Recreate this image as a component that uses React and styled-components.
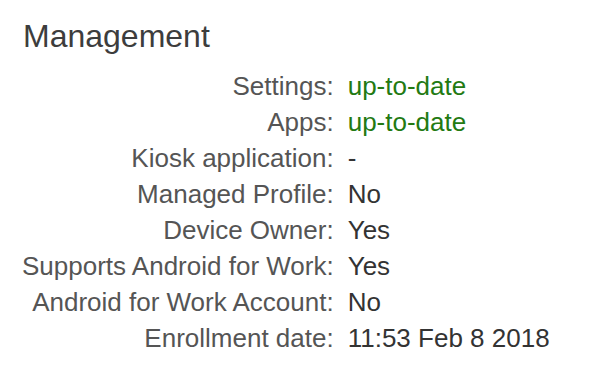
import React from 'react'
import styled, { createGlobalStyle } from 'styled-components'

const GlobalStyle = createGlobalStyle`
  body {
    margin: 0;
    background: #ffffff;
    font-family: 'Liberation Sans', Arial, sans-serif;
  }
`

const rows = [
  { label: 'Settings', value: 'up-to-date', ok: true },
  { label: 'Apps', value: 'up-to-date', ok: true },
  { label: 'Kiosk application', value: '-' },
  { label: 'Managed Profile', value: 'No' },
  { label: 'Device Owner', value: 'Yes' },
  { label: 'Supports Android for Work', value: 'Yes' },
  { label: 'Android for Work Account', value: 'No' },
  { label: 'Enrollment date', value: '11:53 Feb 8 2018' },
]

const App = () => {
  return (
    <Panel>
      <GlobalStyle />
      <Title>Management</Title>
      <Details>
        {rows.map((row) => (
          <React.Fragment key={row.label}>
            <Label>{row.label}:</Label>
            <Value $ok={row.ok}>{row.value}</Value>
          </React.Fragment>
        ))}
      </Details>
    </Panel>
  )
}

export default App

const Panel = styled.section`
  width: 596px;
  height: 378px;
  padding: 17px 0 0 22px;
  box-sizing: border-box;
`
const Title = styled.h2`
  margin: 0 0 13px 1px;
  font-size: 32px;
  line-height: 38px;
  font-weight: 400;
  color: #3d3d3d;
`
const Details = styled.div`
  display: grid;
  grid-template-columns: max-content max-content;
  column-gap: 14px;
  font-size: 26px;
  line-height: 36px;
`
const Label = styled.div`
  text-align: right;
  color: #555555;
`
const Value = styled.div`
  color: ${(p) => (p.$ok ? '#237a12' : '#333333')};
`
